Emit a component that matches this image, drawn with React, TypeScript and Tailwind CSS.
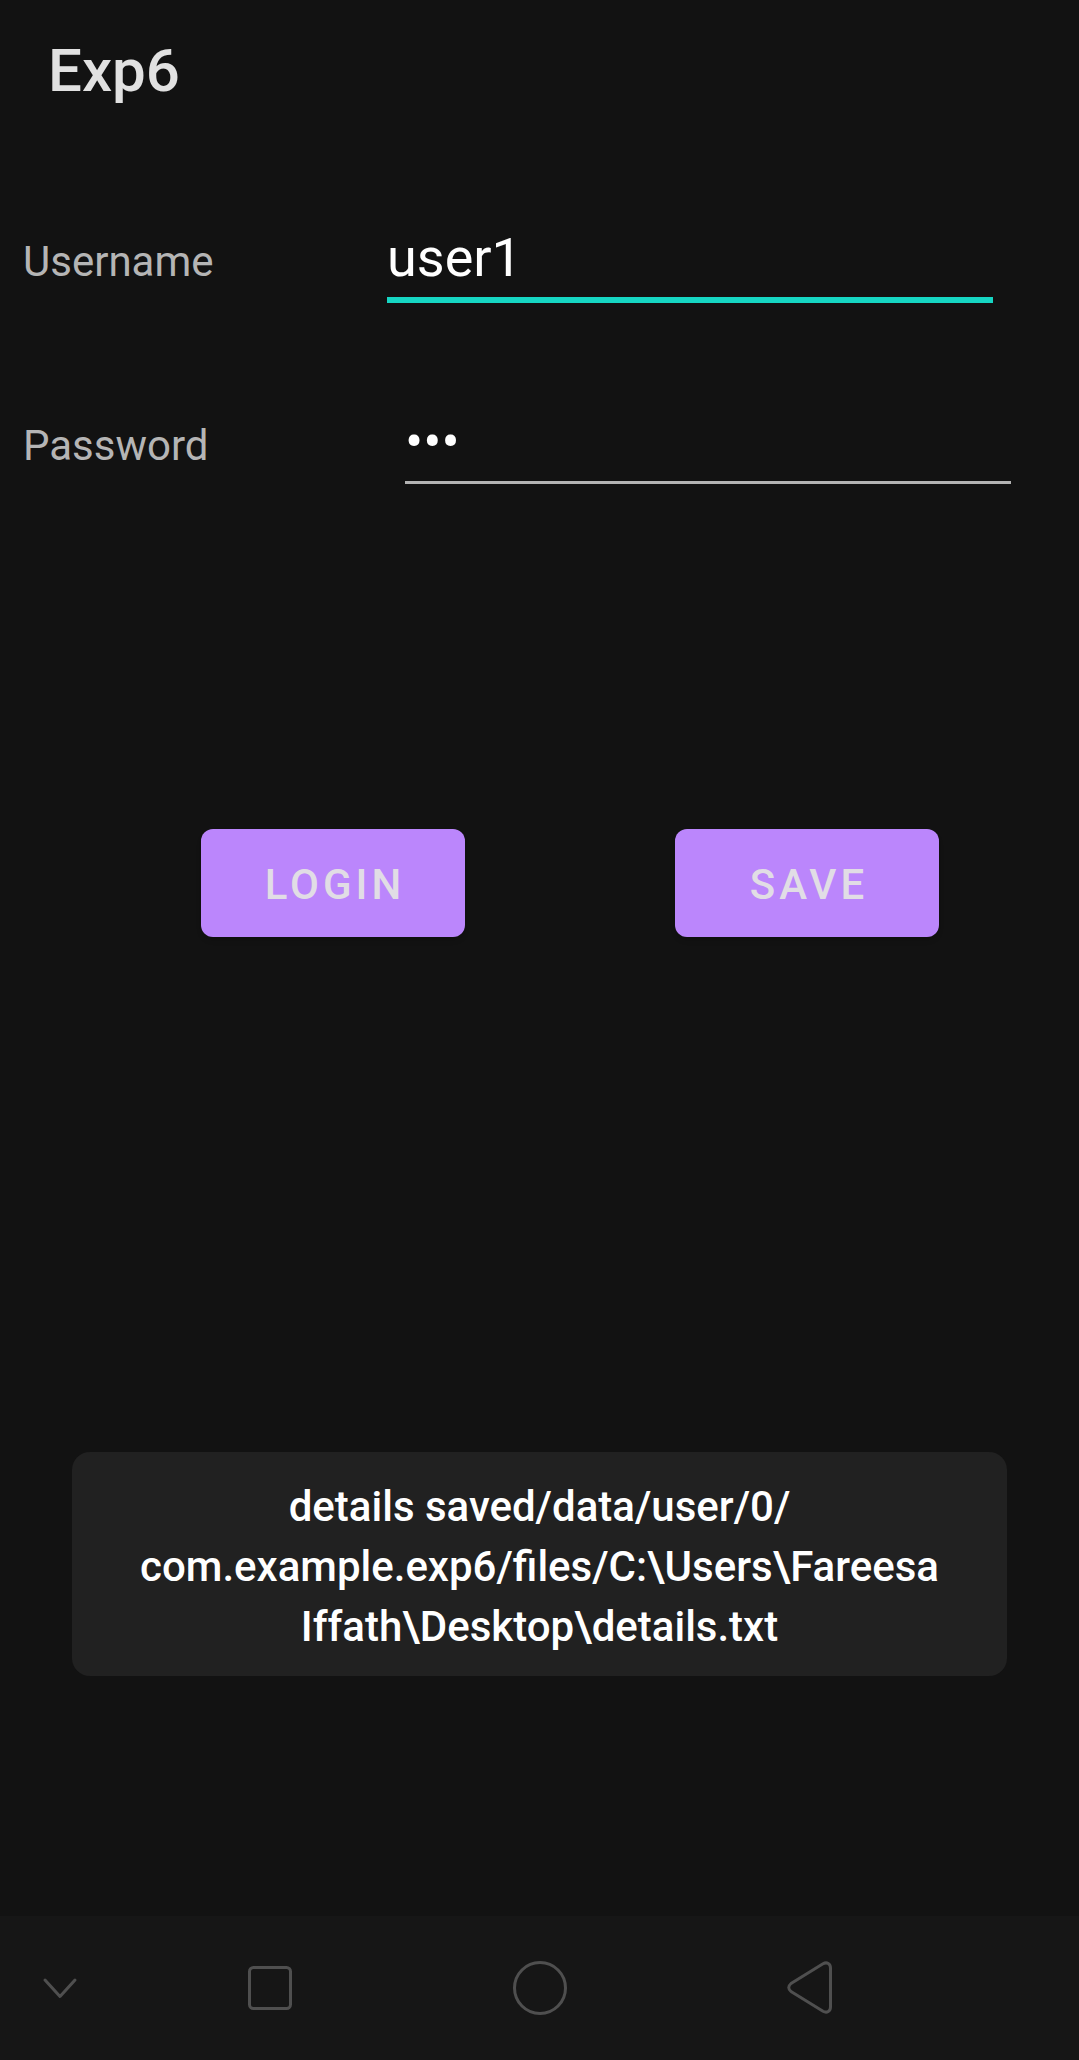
import React from "react";

function Header() {
  return (
    <header className="flex h-[142px] items-center px-12">
      <h1 className="text-[60px] leading-[70px] font-medium text-[#e1e1e1]">Exp6</h1>
    </header>
  );
}

type FieldProps = {
  id: string;
  label: string;
  type: string;
  value: string;
  rowClass: string;
  labelClass: string;
  inputClass: string;
};

function Field({ id, label, type, value, rowClass, labelClass, inputClass }: FieldProps) {
  return (
    <div className={`flex items-baseline pl-[23px] ${rowClass}`}>
      <label htmlFor={id} className={`shrink-0 text-[42px] leading-[50px] text-[#b5b5b5] ${labelClass}`}>
        {label}
      </label>
      <input
        id={id}
        type={type}
        defaultValue={value}
        className={`min-w-0 flex-1 bg-transparent pb-1.5 text-[54px] leading-[66px] text-white outline-none ${inputClass}`}
      />
    </div>
  );
}

function ActionButton({ children }: { children: React.ReactNode }) {
  return (
    <button
      type="button"
      className="h-[108px] w-[264px] rounded-xl bg-[#bb86fc] pt-1 pl-1 text-[42px] leading-[50px] font-medium tracking-[4px] text-[#e1dde5] uppercase shadow-md"
    >
      {children}
    </button>
  );
}

function Toast() {
  return (
    <div role="status" className="mx-[72px] rounded-[18px] bg-[#212121] px-12 pt-[25px] pb-[19px] text-center text-[42px] leading-[60px] font-medium text-white">
      <p>
        details saved/data/user/0/
        <br />
        com.example.exp6/files/C:\Users\Fareesa
        <br />
        Iffath\Desktop\details.txt
      </p>
    </div>
  );
}

function NavIcon({ children }: { children: React.ReactNode }) {
  return (
    <svg width="60" height="60" viewBox="0 0 60 60" fill="none" stroke="#4f4f4f" strokeWidth="3" strokeLinecap="round" strokeLinejoin="round" aria-hidden="true">
      {children}
    </svg>
  );
}

function NavigationBar() {
  return (
    <nav className="grid h-36 grid-cols-8 bg-[#161616]">
      <button type="button" aria-label="Hide keyboard" className="flex items-center justify-start pl-[30px]">
        <NavIcon>
          <path d="M15 22 30 38.500 45 22" />
        </NavIcon>
      </button>
      <button type="button" aria-label="Recent apps" className="col-span-2 flex items-center justify-center">
        <NavIcon>
          <rect x="9.500" y="9.500" width="41" height="41" rx="4" />
        </NavIcon>
      </button>
      <button type="button" aria-label="Home" className="col-span-2 flex items-center justify-center">
        <NavIcon>
          <circle cx="30" cy="30" r="25.500" />
        </NavIcon>
      </button>
      <button type="button" aria-label="Back" className="col-span-2 flex items-center justify-center">
        <NavIcon>
          <path d="M44 5.800 12 25.500Q7.500 29.500 12 33.500L44 53.200C48 55.500 51.500 53 51.500 49V10C51.500 6 48 3.500 44 5.800Z" />
        </NavIcon>
      </button>
    </nav>
  );
}

export default function App() {
  return (
    <div className="flex min-h-screen flex-col bg-[#121212] font-[Roboto,sans-serif]">
      <Header />
      <main className="flex flex-1 flex-col pt-[83px] pb-60">
        <form onSubmit={(e) => e.preventDefault()}>
          <Field id="username" label="Username" type="text" value="user1" rowClass="pr-[86px]" labelClass="w-[364px]" inputClass="border-b-6 border-[#16d6c3]" />
          <Field id="password" label="Password" type="password" value="abc" rowClass="mt-[106px] pr-[68px]" labelClass="w-[382px]" inputClass="border-b-3 border-[#b3b3b3]" />
          <div className="mt-[345px] flex justify-between pr-[140px] pl-[201px]">
            <ActionButton>Login</ActionButton>
            <ActionButton>Save</ActionButton>
          </div>
        </form>
        <div className="mt-auto pt-12">
          <Toast />
        </div>
      </main>
      <NavigationBar />
    </div>
  );
}
